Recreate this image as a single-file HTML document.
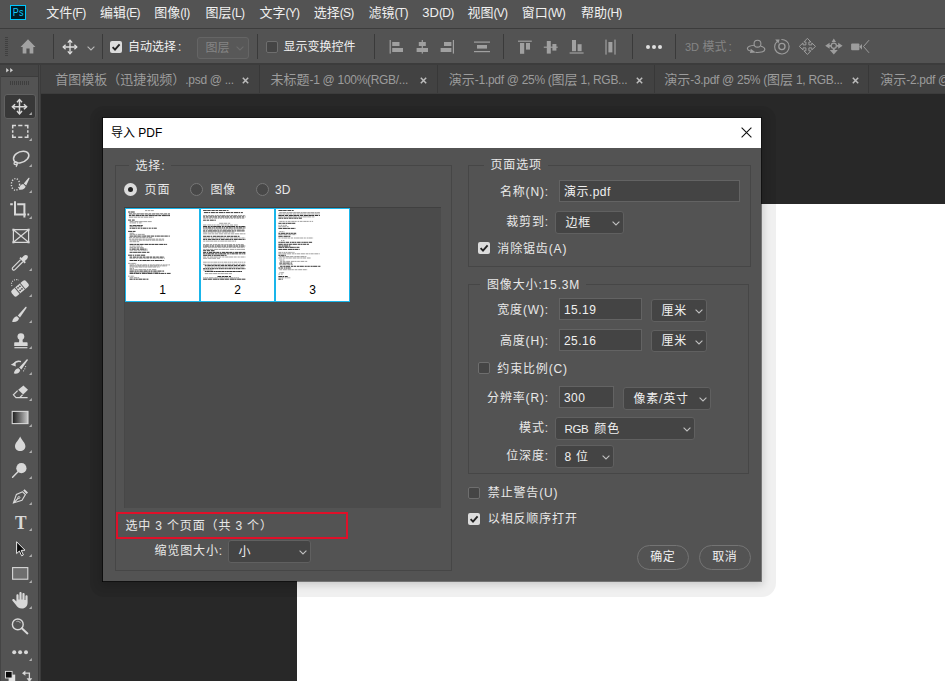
<!DOCTYPE html>
<html lang="zh-CN">
<head>
<meta charset="utf-8">
<title>导入 PDF</title>
<style>
*{box-sizing:border-box;margin:0;padding:0}
html,body{width:945px;height:681px;overflow:hidden;background:#282828}
body{position:relative;font-family:"Liberation Sans","Noto Sans CJK SC",sans-serif;font-size:12px;color:#e6e6e6}
.abs{position:absolute}
#menubar{left:0;top:0;width:945px;height:28px;background:#535353}
#menuline{left:0;top:28px;width:945px;height:1px;background:#3c3c3c}
#optbar{left:0;top:29px;width:945px;height:34px;background:#535353}
#optline{left:0;top:63px;width:945px;height:2px;background:#3c3c3c}
#toolbar{left:0;top:65px;width:41px;height:616px;background:#535353}
#toolline{display:none}
#tabbar{left:41px;top:65px;width:904px;height:29px;background:#424242;border-bottom:1px solid #3c3c3c}
#canvas{left:297px;top:204px;width:648px;height:477px;background:#fff}
.menu{position:absolute;top:0;height:27px;line-height:26px;font-size:13px;color:#f0f0f0;white-space:nowrap}
.tab{position:absolute;top:1px;height:28px;line-height:28px;font-size:13px;color:#9c9c9c;white-space:nowrap}
.tabsep{position:absolute;top:0;width:1px;height:28px;background:#383838}
.tabx{position:absolute;top:0;height:28px;line-height:27px;font-size:11px;color:#c8c8c8;font-weight:bold}
.vsep{position:absolute;top:5px;width:1px;height:25px;background:#3a3a3a}
#dlg{left:103px;top:117px;width:658px;height:464px;background:#535353;box-shadow:0 2px 8px 2px rgba(0,0,0,0.16)}
#dshadow{left:90px;top:106px;width:686px;height:491px;border-radius:14px;background:rgba(0,0,0,0.06)}
#dlgtitle{left:0;top:1px;width:658px;height:30px;background:#fff;color:#000;font-size:12px;line-height:31px;padding-left:8px}
.lbl{position:absolute;white-space:nowrap;font-size:12px;color:#e8e8e8;line-height:16px;letter-spacing:0.85px}
.grp{position:absolute;border:1px solid #464646}
.inp{position:absolute;background:#444;border:1px solid #636363;color:#f0f0f0;font-size:12px;line-height:18px;padding-left:4px;white-space:nowrap;letter-spacing:0.45px}
.sel{position:absolute;background:#444;border:1px solid #606060;border-radius:3px;color:#f0f0f0;font-size:12px;line-height:18px;padding-left:9.5px;white-space:nowrap;letter-spacing:0.8px}
.cb{position:absolute;width:12px;height:12px;border-radius:2px}
.cb.on{background:#dcdcdc}
.cb.off{background:#454545;border:1px solid #6e6e6e}
.btn{position:absolute;height:25px;border:1px solid #747474;border-radius:13px;color:#f0f0f0;font-size:12px;line-height:23px;text-align:center;letter-spacing:0.6px}

.chev{position:absolute;right:3.5px;top:8.5px}
.rd{position:absolute;width:13px;height:13px;border-radius:50%}
.rd.on{background:#dcdcdc}
.rd.on::after{content:"";position:absolute;left:4px;top:4px;width:5px;height:5px;border-radius:50%;background:#222}
.rd.off{background:#484848;border:1px solid #777}
#tlist{background:#4b4b4b;border-top:1px solid #404040;border-left:1px solid #474747}
.thumb{position:absolute;width:75px;height:94px;background:#fff;border:1px solid #19b5ea}
.tnum{position:absolute;left:0;width:73px;top:73px;text-align:center;color:#000;font-size:12px;line-height:16px}

.olbl{position:absolute;white-space:nowrap;font-size:12px;line-height:16px;color:#f0f0f0}

.ml{font-size:12px;letter-spacing:-0.7px}
.la{font-size:12px;letter-spacing:-0.3px}
</style>
</head>
<body>
<div id="menubar" class="abs">
<div class="abs" style="left:10px;top:5px;width:16px;height:15px;background:#001c26;border:1px solid #00c8ff;color:#14c6fa;font-size:10.5px;line-height:13px;text-align:center"><span style="display:inline-block;transform:scaleX(0.86)">Ps</span></div>
<div class="menu" style="left:46.3px">文件<span class="ml">(F)</span></div>
<div class="menu" style="left:100px">编辑<span class="ml">(E)</span></div>
<div class="menu" style="left:154.3px">图像<span class="ml">(I)</span></div>
<div class="menu" style="left:205.6px">图层<span class="ml">(L)</span></div>
<div class="menu" style="left:259.4px">文字<span class="ml">(Y)</span></div>
<div class="menu" style="left:313.7px">选择<span class="ml">(S)</span></div>
<div class="menu" style="left:368.5px">滤镜<span class="ml">(T)</span></div>
<div class="menu" style="left:422.3px">3D<span class="ml">(D)</span></div>
<div class="menu" style="left:467.5px">视图<span class="ml">(V)</span></div>
<div class="menu" style="left:521.8px">窗口<span class="ml">(W)</span></div>
<div class="menu" style="left:581.1px">帮助<span class="ml">(H)</span></div>
</div>
<div id="menuline" class="abs"></div>
<div id="optbar" class="abs">
<div class="abs" style="left:5px;top:8px;width:3px;height:19px;background:repeating-linear-gradient(to bottom,#404040 0,#404040 1px,transparent 1px,transparent 2px)"></div>
<svg class="abs" style="left:20px;top:10.4px" width="16" height="15" viewBox="0 0 18 15" preserveAspectRatio="none"><path d="M9 0.3 L0.6 8 L3 8 L3 14.5 L7.2 14.5 L7.2 9.5 L10.8 9.5 L10.8 14.5 L15 14.5 L15 8 L17.4 8 Z" fill="#a2a2a2"/></svg>
<div class="vsep" style="left:53px"></div>
<svg class="abs" style="left:61.5px;top:9.5px" width="16" height="16" viewBox="0 0 16 16"><g fill="none" stroke="#dedede" stroke-width="1.3"><path d="M8 1.5 V14.5 M1.5 8 H14.5"/><path d="M5.8 3.6 L8 1.2 L10.2 3.6 M5.8 12.4 L8 14.8 L10.2 12.4 M3.6 5.8 L1.2 8 L3.6 10.2 M12.4 5.8 L14.8 8 L12.4 10.2"/></g></svg>
<svg class="abs" style="left:86.5px;top:16.5px" width="8" height="5" viewBox="0 0 8 5"><path d="M0.6 0.6 L4 4 L7.4 0.6" fill="none" stroke="#b8b8b8" stroke-width="1.1"/></svg>
<div class="vsep" style="left:102px"></div>
<div class="cb on" style="left:110px;top:12px"><svg width="12" height="12" viewBox="0 0 12 12"><path d="M2.6 6.2 L5 8.6 L9.6 3.4" fill="none" stroke="#222" stroke-width="1.9"/></svg></div>
<div class="olbl" style="left:128px;top:10px">自动选择<span style="margin-left:2px">:</span></div>
<div class="abs" style="left:196.5px;top:7.5px;width:52px;height:22px;border:1px solid #656565;border-radius:3px;background:#585858;color:#858585;font-size:12px;line-height:20px;padding-left:8px">图层<svg class="abs" style="right:4px;top:8px" width="8" height="5" viewBox="0 0 8 5"><path d="M0.6 0.6 L4 4 L7.4 0.6" fill="none" stroke="#6c6c6c" stroke-width="1.1"/></svg></div>
<div class="vsep" style="left:257px"></div>
<div class="cb off" style="left:265.7px;top:12px"></div>
<div class="olbl" style="left:283.6px;top:10px">显示变换控件</div>
<div class="vsep" style="left:374px"></div>
<div class="vsep" style="left:503px"></div>
<div class="vsep" style="left:632px"></div>
<div class="abs" style="left:646px;top:15.5px;width:4px;height:4px;border-radius:50%;background:#e0e0e0;box-shadow:6px 0 0 #e0e0e0,12px 0 0 #e0e0e0"></div>
<div class="vsep" style="left:675px"></div>
<div class="olbl" style="left:685px;top:10px;color:#858585"><span style="font-size:11px">3D</span> 模式<span style="margin-left:2px">:</span></div>
<svg class="abs" style="left:380px;top:0" width="500" height="34" viewBox="380 29 500 34">
<g fill="#a0a0a0" stroke="none">
<rect x="389.6" y="40" width="1.2" height="13.6"/><rect x="392.2" y="42" width="7.3" height="4"/><rect x="392.2" y="48" width="10.8" height="4"/>
<rect x="421.7" y="40" width="1.2" height="13.6"/><rect x="418.8" y="42" width="7" height="4"/><rect x="416.6" y="48" width="11.4" height="4"/>
<rect x="452.8" y="40" width="1.2" height="13.6"/><rect x="444" y="42" width="7.4" height="4"/><rect x="440.6" y="48" width="10.8" height="4"/>
<rect x="474" y="41.5" width="16" height="1.2"/><rect x="474" y="51" width="16" height="1.2"/><rect x="477" y="45" width="10" height="3.6"/>
<rect x="518" y="40.6" width="13.8" height="1.2"/><rect x="520" y="43" width="4.2" height="10.8"/><rect x="526" y="43" width="4" height="6.6"/>
<rect x="543.8" y="46.6" width="13.9" height="1.2"/><rect x="546.8" y="41" width="4" height="12.6"/><rect x="552.4" y="44" width="4" height="6.6"/>
<rect x="569.6" y="52.4" width="14" height="1.2"/><rect x="572" y="40" width="4" height="11.2"/><rect x="577.6" y="44.2" width="4" height="7"/>
<rect x="605.4" y="39.6" width="1.2" height="15"/><rect x="614.4" y="39.6" width="1.2" height="15"/><rect x="608.4" y="42" width="4" height="10.4"/>
</g>
<g fill="none" stroke="#9c9c9c" stroke-width="1.1">
<circle cx="757.5" cy="43.7" r="3.4"/>
<path d="M754.2 45.2 C750.6 45.4 747.2 46.8 747.4 48.8 C747.5 49.8 748.6 50.6 750.4 51 M755.6 52.4 C759.4 52.7 764.6 52 764.8 49.6 C764.9 47.9 763 46.7 760.9 46.2"/>
<circle cx="781.9" cy="46.5" r="3.1" stroke-width="1.3"/>
<path d="M777 41.6 C774 44.2 773.8 49.2 776.8 52 C779.8 54.8 784.6 54.6 787.3 51.6 C790 48.6 789.6 43.8 786.6 41.2 C785 39.9 783.2 39.4 781.4 39.5"/>
<path d="M807.4 38.3 L810.9 42.0 H808.9 V44.9 H811.8 V42.9 L815.5 46.4 L811.8 49.9 V47.9 H808.9 V50.8 H810.9 L807.4 54.5 L803.9 50.8 H805.9 V47.9 H803.0 V49.9 L799.3 46.4 L803.0 42.9 V44.9 H805.9 V42.0 H803.9 Z" stroke-width="1"/>
<circle cx="833.8" cy="45.8" r="2.6" stroke-width="1.2"/>
<path d="M869 40.2 L863.5 46.5 L869 52.8" stroke-width="1"/>
</g>
<g fill="#9c9c9c">
<path d="M750.7 48.7 L755.8 52.4 L750 53 Z"/>
<path d="M775.2 39.6 L779.6 39.6 L778.4 43.6 Z"/>
<path d="M833.8 38.6 L836 42 H831.6 Z M825.2 45.8 L829.6 42.8 V44.9 H831 V46.7 H829.6 V48.8 Z M842.6 45.8 L838.2 42.8 V44.9 H836.8 V46.7 H838.2 V48.8 Z M833.8 54.4 L829.8 50 H832.8 V48.6 H834.8 V50 H837.8 Z"/>
<rect x="851.1" y="43.5" width="8.3" height="6.7" rx="1"/><path d="M859.2 46.8 L862 43.9 V49.8 Z"/>
</g>
</svg>
</div>
<div id="optline" class="abs"></div>
<div id="toolbar" class="abs">
<div class="abs" style="left:0;top:0;width:40px;height:11px;background:#454545"></div>
<div class="abs" style="left:0;top:11px;width:40px;height:1px;background:#3c3c3c"></div>
<div class="abs" style="left:10px;top:15.5px;width:19px;height:4px;background:repeating-linear-gradient(to right,#3e3e3e 0,#3e3e3e 1px,transparent 1px,transparent 2px)"></div>
<svg class="abs" style="left:5.5px;top:3.4px" width="8" height="5" viewBox="0 0 8 5"><path d="M0.2 0 L3 2.3 L0.2 4.6 Z M4.2 0 L7 2.3 L4.2 4.6 Z" fill="#d0d0d0"/></svg>
<div class="abs" style="left:4px;top:28.5px;width:31.5px;height:25px;background:#383838;border:1px solid #616161;border-radius:3px"></div>
<svg class="abs" style="left:0;top:0" width="40" height="616" viewBox="0 65 40 616">
<g fill="none" stroke="#d8d8d8" stroke-width="1.4" stroke-linejoin="miter">
<!-- move -->
<path d="M19.5 99.8 V113.6 M12.6 106.7 H26.4" stroke-width="1.5"/>
<path d="M17 102.3 L19.5 99.6 L22 102.3 M17 111.1 L19.5 113.8 L22 111.1 M15.1 104.2 L12.4 106.7 L15.1 109.2 M23.9 104.2 L26.6 106.7 L23.9 109.2" stroke-width="1.5"/>
<!-- marquee -->
<path d="M12.7 128.5 V125.6 H16 M18.2 125.6 H22.4 M24.6 125.6 H27.8 V128.5 M27.8 130.3 V132.7 M27.8 134.5 V137.2 H24.6 M22.4 137.2 H18.2 M16 137.2 H12.7 V134.5 M12.7 132.7 V130.3" stroke-width="1.5"/>
<!-- lasso -->
<path d="M16.6 162.6 C12.6 161.2 12.4 156.6 16.4 153.6 C20.4 150.6 26.6 150.4 28.4 153.6 C30.2 157 26.4 161.6 20.6 162.8 C18.6 163.2 17.4 162.9 16.6 162.6 Z" stroke-width="1.5"/>
<path d="M17.6 163.4 C17.4 161.6 14.2 161.4 14 163.2 C13.9 164.8 17 165 17.3 163.4 C17.4 164.6 16.8 166 16 166.8" stroke-width="1.3"/>
<!-- quick select dotted circle -->
<ellipse cx="15.5" cy="184.4" rx="4.1" ry="5.8" stroke-width="1.4" stroke-dasharray="1.2 1.5"/>
<!-- crop -->
<path d="M10.2 204.3 H12.8 M15 201.2 V214.6 H25.8 M27.4 214.6 H29.2" stroke-width="2"/>
<path d="M17.2 204.3 H24.4 V217.6" stroke-width="2"/>
<!-- frame -->
<path d="M13.4 229.7 H28.6 V242.3 H13.4 Z M13.4 229.7 L28.6 242.3 M28.6 229.7 L13.4 242.3" stroke-width="1.2"/>
<!-- eyedropper tube -->
<path d="M20.6 259.6 L12.9 267.3 C12 268.2 12.2 269.3 12.8 269.7 C13.4 270.2 14.4 270.2 15.2 269.4 L22.9 261.8" stroke-width="1.2"/>
<!-- healing dotted -->
<path d="M12 286 C10.4 283 12.6 279.6 16.4 279.6 C17.4 279.6 18.2 279.8 18.8 280.2" stroke-width="1.1" stroke-dasharray="1 1.3"/>
<!-- eraser outline -->
<path d="M17.6 390.6 L13.4 394.8 L16 397.6 H19.6 L22.6 394.8 M16 397.6 H27.6" stroke-width="1.2"/>
<!-- history brush arrow -->
<path d="M13.6 364.4 C15.4 361.6 18.4 360.8 21 361.6" stroke-width="1.3"/>
<!-- pen -->
<path d="M22.6 491.8 L16.4 494.4 L13.4 503 L22 500.4 L25.4 494.6 Z M13.6 502.8 L18.4 498" stroke-width="1.1"/>
<circle cx="18.9" cy="497.5" r="1" stroke-width="0.9"/>
<!-- zoom -->
<circle cx="17.8" cy="624.4" r="5.4" stroke-width="1.4"/>
<path d="M21.8 628.3 L27.4 633.4" stroke-width="2" stroke-linecap="round"/>
<path d="M16.4 621.6 C18 620.8 20 621.6 20.6 623.2" stroke-width="0.9" stroke="#bdbdbd"/>
<!-- dodge handle -->
<path d="M18 471.8 L12.6 477.2" stroke-width="1.5" stroke-linecap="round"/>
<!-- stamp base line -->
<path d="M14.4 347.7 H27.4" stroke-width="1.2"/>
<!-- swap arrows -->
<path d="M24.6 673.2 H29.4 V679" stroke-width="1.3"/>
</g>
<g fill="#d8d8d8" stroke="none">
<!-- frame corner dots -->
<rect x="12.4" y="228.7" width="2" height="2"/><rect x="27.6" y="228.7" width="2" height="2"/><rect x="12.4" y="241.3" width="2" height="2"/><rect x="27.6" y="241.3" width="2" height="2"/>
<!-- quick select brush -->
<path d="M18.8 189.4 C19 186.6 21 184.4 23.2 184 L25.6 186.4 C25 188.8 22.6 190.2 18.8 189.4 Z"/>
<path d="M23.8 183.4 L28.6 177.8 C29.2 177.4 29.8 178 29.4 178.7 L26.2 185.6 Z"/>
<!-- eyedropper head -->
<path d="M19.4 258.2 L20.6 257 L21.7 258 L23.6 256 C24.8 254.6 26.6 254.6 27.4 255.6 C28.2 256.6 28 258 26.8 259.2 L24.8 261.1 L25.8 262.2 L24.6 263.4 Z"/>
<!-- healing band-aid -->
<g transform="rotate(-40 20 288.4)">
<rect x="10.6" y="284.6" width="18.8" height="7.8" rx="2.2"/>
</g>
<!-- brush -->
<path d="M12.2 322 C12.6 318.6 14.6 316.4 17 316.2 L19 318.2 C18.6 320.8 16.2 322.6 12.2 322 Z"/>
<path d="M17.8 315.4 L25.4 307 C26 306.4 26.9 307.1 26.5 307.9 L20 317.6 Z"/>
<!-- stamp -->
<circle cx="20.9" cy="336.6" r="3.4"/>
<path d="M19.4 338.6 H22.4 L22.8 342.2 H26.6 C27.2 342.2 27.6 342.6 27.6 343.2 V345.9 H14.2 V343.2 C14.2 342.6 14.6 342.2 15.2 342.2 H19 Z"/>
<!-- history brush -->
<path d="M13.8 373.6 C14.2 370.4 16.2 368.4 18.4 368.2 L20.2 370 C19.8 372.6 17.6 374.2 13.8 373.6 Z"/>
<path d="M19.2 367.4 L26.6 359.4 C27.2 358.8 28.1 359.5 27.7 360.3 L21.4 369.6 Z"/>
<path d="M10.8 364.8 L15.4 362 L15.8 366.4 Z"/>
<circle cx="25.6" cy="366.6" r="0.6"/><circle cx="24.8" cy="368.8" r="0.6"/><circle cx="23.6" cy="370.8" r="0.6"/>
<!-- eraser top -->
<path d="M18.2 389.8 L23.4 385.4 L28 389.8 L23.2 394.4 Z"/>
<!-- drop -->
<path d="M20.2 436.6 C21.6 440 25.4 443 25.4 446.2 C25.4 449 23.2 451 20.2 451 C17.2 451 15 449 15 446.2 C15 443 18.8 440 20.2 436.6 Z"/>
<!-- dodge -->
<circle cx="21.4" cy="468.2" r="5.1"/>
<!-- pen cap -->
<path d="M23.2 490.6 L24.6 489.2 L28 492.6 L26.6 494 Z"/>
<!-- hand -->
<path d="M12.3 600.4 C12 599.2 13.2 598.4 14.2 599.2 L16.4 601.6 V595.4 C16.4 594 18.6 594 18.6 595.4 V599.6 H19.4 V593 C19.4 591.6 21.6 591.6 21.6 593 V599.6 H22.4 V594 C22.4 592.6 24.6 592.6 24.6 594 V600 H25.4 V596.4 C25.4 595 27.6 595 27.6 596.4 V602.4 C27.6 606 25.4 608.4 22 608.4 C18.6 608.4 17.4 607 15.6 604.4 Z"/>
<!-- dots -->
<circle cx="14.2" cy="652.2" r="2"/><circle cx="20.1" cy="652.2" r="2"/><circle cx="26" cy="652.2" r="2"/>
<!-- swap arrow heads -->
<path d="M22 673.2 L25.4 670.6 V675.8 Z"/><path d="M29.4 682.2 L26.6 678.2 H32.2 Z"/>
</g>
<!-- heal squares -->
<g fill="#535353" transform="rotate(-40 20 288.4)">
<rect x="16.2" y="284.6" width="0.9" height="7.8"/><rect x="22.9" y="284.6" width="0.9" height="7.8"/>
<rect x="18" y="286" width="1.6" height="1.6"/><rect x="20.4" y="286" width="1.6" height="1.6"/><rect x="18" y="289.2" width="1.6" height="1.6"/><rect x="20.4" y="289.2" width="1.6" height="1.6"/>
</g>
<!-- gradient -->
<defs><linearGradient id="gr" x1="0" x2="1" y1="0" y2="0"><stop offset="0" stop-color="#1a1a1a"/><stop offset="1" stop-color="#c8c8c8"/></linearGradient></defs>
<rect x="12.2" y="411.4" width="15.8" height="12.2" fill="url(#gr)" stroke="#d8d8d8" stroke-width="1.1"/>
<!-- rectangle tool -->
<rect x="12.6" y="567.6" width="15.2" height="11.6" fill="#6e6e6e" stroke="#d8d8d8" stroke-width="1.1"/>
<!-- arrow -->
<path d="M16.6 541.8 V553.6 L19.4 551 L21.6 555.8 L23.4 555 L21.2 550.4 L25 550.2 Z" fill="#0a0a0a" stroke="#e8e8e8" stroke-width="1"/>
<!-- fg/bg -->
<rect x="8.6" y="674.6" width="6.6" height="7" fill="#e0e0e0"/>
<rect x="5.5" y="671.4" width="6.6" height="6.6" fill="#0a0a0a" stroke="#e0e0e0" stroke-width="0.9"/>
<!-- flyout triangles -->
<g fill="#b4b4b4">
<path d="M31.8 112.1 V114.9 H29 Z"/>
<path d="M31.8 138.1 V140.9 H29 Z"/>
<path d="M31.8 164.1 V166.9 H29 Z"/>
<path d="M31.8 190.1 V192.9 H29 Z"/>
<path d="M31.8 216.1 V218.9 H29 Z"/>
<path d="M31.8 268.1 V270.9 H29 Z"/>
<path d="M31.8 294.1 V296.9 H29 Z"/>
<path d="M31.8 320.1 V322.9 H29 Z"/>
<path d="M31.8 346.1 V348.9 H29 Z"/>
<path d="M31.8 372.1 V374.9 H29 Z"/>
<path d="M31.8 398.1 V400.9 H29 Z"/>
<path d="M31.8 424.1 V426.9 H29 Z"/>
<path d="M31.8 450.1 V452.9 H29 Z"/>
<path d="M31.8 476.1 V478.9 H29 Z"/>
<path d="M31.8 502.1 V504.9 H29 Z"/>
<path d="M31.8 528.1 V530.9 H29 Z"/>
<path d="M31.8 554.1 V556.9 H29 Z"/>
<path d="M31.8 580.1 V582.9 H29 Z"/>
<path d="M31.8 606.1 V608.9 H29 Z"/>
<path d="M31.8 658.1 V660.9 H29 Z"/>
</g>
<text x="0" y="529" text-anchor="middle" transform="translate(20.8 0) scale(0.89 1)" font-family="Liberation Serif, serif" font-weight="bold" font-size="19.5" fill="#d8d8d8">T</text>
</svg>
</div>
<div class="abs" style="left:0;top:65px;width:1px;height:616px;background:#444"></div>
<div class="abs" style="left:38px;top:65px;width:3px;height:616px;background:#3b3b3b"></div><div class="abs" style="left:39px;top:65px;width:1px;height:616px;background:#474747"></div>
<div id="tabbar" class="abs">
<div class="tab" style="left:14.3px">首图模板（迅捷视频）<span class="la">.psd @ ...</span></div>
<svg class="abs" style="left:200.8px;top:11.5px" width="7" height="7" viewBox="0 0 7 7"><path d="M0.8 0.8 L6.2 6.2 M6.2 0.8 L0.8 6.2" stroke="#bdbdbd" stroke-width="1.5" fill="none"/></svg>
<div class="tabsep" style="left:218px"></div>
<div class="tab" style="left:229.5px">未标题<span class="la">-1 @ 100%(RGB/...</span></div>
<svg class="abs" style="left:378.8px;top:11.5px" width="7" height="7" viewBox="0 0 7 7"><path d="M0.8 0.8 L6.2 6.2 M6.2 0.8 L0.8 6.2" stroke="#bdbdbd" stroke-width="1.5" fill="none"/></svg>
<div class="tabsep" style="left:396px"></div>
<div class="tab" style="left:407.8px">演示<span class="la">-1.pdf @ 25% (</span>图层<span class="la"> 1, RGB...</span></div>
<svg class="abs" style="left:594.7px;top:11.5px" width="7" height="7" viewBox="0 0 7 7"><path d="M0.8 0.8 L6.2 6.2 M6.2 0.8 L0.8 6.2" stroke="#bdbdbd" stroke-width="1.5" fill="none"/></svg>
<div class="tabsep" style="left:613px"></div>
<div class="tab" style="left:623.2px">演示<span class="la">-3.pdf @ 25% (</span>图层<span class="la"> 1, RGB...</span></div>
<svg class="abs" style="left:810.7px;top:11.5px" width="7" height="7" viewBox="0 0 7 7"><path d="M0.8 0.8 L6.2 6.2 M6.2 0.8 L0.8 6.2" stroke="#bdbdbd" stroke-width="1.5" fill="none"/></svg>
<div class="tabsep" style="left:827px"></div>
<div class="tab" style="left:839.2px">演示<span class="la">-2.pdf @ 25% (</span>图层<span class="la"> 1, RGB...</span></div>
</div>
<div id="canvas" class="abs"></div>
<div id="dshadow" class="abs"></div>
<div id="dlg" class="abs">
<div class="abs" style="left:-1px;top:0;width:660px;height:1px;background:#171717"></div>
<div class="abs" style="left:-1px;top:0;width:1px;height:465px;background:rgba(0,0,0,0.55)"></div>
<div class="abs" style="left:658px;top:0;width:1px;height:465px;background:rgba(0,0,0,0.45)"></div>
<div class="abs" style="left:-1px;top:464px;width:659px;height:1px;background:rgba(0,0,0,0.45)"></div>
<div id="dlgtitle" class="abs">导入 PDF</div>
<svg class="abs" style="left:637.5px;top:9.8px" width="11" height="11" viewBox="0 0 11 11"><path d="M0.6 0.6 L10.4 10.4 M10.4 0.6 L0.6 10.4" stroke="#111" stroke-width="1.1" fill="none"/></svg>
<div class="grp" style="left:12px;top:48px;width:337px;height:406px"></div>
<div class="lbl glbl" style="left:25.5px;top:40.5px;padding:0 6px 0 7px;background:#535353">选择:</div>
<div class="rd on" style="left:21.0px;top:65.5px"></div>
<div class="lbl" style="left:41.6px;top:65px;">页面</div>
<div class="rd off" style="left:86.9px;top:65.5px"></div>
<div class="lbl" style="left:107.5px;top:65px;">图像</div>
<div class="rd off" style="left:153.2px;top:65.5px"></div>
<div class="lbl" style="left:172px;top:65px;letter-spacing:0">3D</div>
<div class="abs" id="tlist" style="left:21px;top:90px;width:317px;height:301px"></div>
<div class="thumb" style="left:22px;top:91px"><svg class="abs" style="left:1px;top:1px" width="73" height="72" viewBox="0 0 73 72" ><g stroke="#000" fill="none"><path d="M18.0 0.6H26.8" stroke-width="0.8" stroke-opacity="0.48" stroke-dasharray="2.0 0.6 2.4 0.6 3.3 0.3 1.2 0.7"/><path d="M1.1 2.0H7.7" stroke-width="1.0" stroke-opacity="0.78" stroke-dasharray="2.1 0.4 4.5 0.5 4.0 0.5 3.3 0.4"/><path d="M1.9 3.5H43.0" stroke-width="0.8" stroke-opacity="0.48" stroke-dasharray="3.3 0.7 2.9 0.7 3.4 0.3 3.7 0.6"/><path d="M1.9 4.7H43.0" stroke-width="0.8" stroke-opacity="0.48" stroke-dasharray="2.2 0.3 4.1 0.5 3.6 0.7 3.6 0.8"/><path d="M1.9 5.6H43.0" stroke-width="1.0" stroke-opacity="0.78" stroke-dasharray="2.5 0.7 2.7 0.8 4.1 0.3 1.6 0.4"/><path d="M1.9 7.2H26.8" stroke-width="0.8" stroke-opacity="0.48" stroke-dasharray="4.4 0.5 3.3 0.5 2.9 0.5 2.4 0.6"/><path d="M1.1 10.1H7.7" stroke-width="1.0" stroke-opacity="0.78" stroke-dasharray="3.1 0.8 3.5 0.8 4.0 0.8 3.4 0.4"/><path d="M2.6 11.6H25.4" stroke-width="0.8" stroke-opacity="0.48" stroke-dasharray="4.0 0.8 4.2 0.6 3.6 0.4 3.9 0.6"/><path d="M2.6 12.9H15.1" stroke-width="0.8" stroke-opacity="0.48" stroke-dasharray="2.1 0.3 4.0 0.8 1.5 0.7 2.6 0.4"/><path d="M2.6 15.6H15.8" stroke-width="1.0" stroke-opacity="0.78" stroke-dasharray="2.2 0.7 4.1 0.3 3.2 0.3 3.6 0.5"/><path d="M2.6 16.7H15.1" stroke-width="0.8" stroke-opacity="0.48" stroke-dasharray="4.1 0.8 2.9 0.8 2.2 0.3 3.2 0.3"/><path d="M2.6 18.2H29.8" stroke-width="1.0" stroke-opacity="0.78" stroke-dasharray="1.9 0.5 3.2 0.4 1.3 0.7 2.2 0.8"/><path d="M1.1 21.4H8.5" stroke-width="1.0" stroke-opacity="0.78" stroke-dasharray="4.2 0.5 2.7 0.6 3.3 0.6 3.0 0.6"/><path d="M2.6 23.2H7.7" stroke-width="0.8" stroke-opacity="0.48" stroke-dasharray="4.3 0.6 2.6 0.7 2.0 0.5 4.4 0.6"/><path d="M2.6 24.4H18.0" stroke-width="0.8" stroke-opacity="0.48" stroke-dasharray="3.0 0.3 2.6 0.6 1.3 0.6 3.3 0.3"/><path d="M2.6 26.1H43.0" stroke-width="1.0" stroke-opacity="0.78" stroke-dasharray="3.3 0.5 3.4 0.5 3.5 0.7 1.3 0.3"/><path d="M1.9 27.6H25.4" stroke-width="0.8" stroke-opacity="0.48" stroke-dasharray="3.4 0.8 2.0 0.5 3.2 0.5 2.4 0.5"/><path d="M1.9 29.1H37.1" stroke-width="0.8" stroke-opacity="0.48" stroke-dasharray="2.4 0.6 2.2 0.5 3.7 0.3 3.1 0.7"/><path d="M2.6 30.2H37.1" stroke-width="0.8" stroke-opacity="0.48" stroke-dasharray="2.2 0.4 3.9 0.4 1.8 0.5 3.5 0.4"/><path d="M2.6 31.7H12.2" stroke-width="0.8" stroke-opacity="0.48" stroke-dasharray="2.3 0.5 4.0 0.5 4.0 0.4 2.3 0.6"/><path d="M2.6 34.4H40.1" stroke-width="1.0" stroke-opacity="0.78" stroke-dasharray="4.1 0.5 1.9 0.4 2.9 0.4 3.9 0.7"/><path d="M2.6 36.1H15.8" stroke-width="0.8" stroke-opacity="0.48" stroke-dasharray="1.8 0.4 3.9 0.6 3.9 0.5 1.6 0.4"/><path d="M2.6 37.6H16.6" stroke-width="0.8" stroke-opacity="0.48" stroke-dasharray="3.8 0.4 2.3 0.5 2.6 0.5 4.2 0.4"/><path d="M2.6 39.1H20.2" stroke-width="1.0" stroke-opacity="0.78" stroke-dasharray="1.2 0.8 4.1 0.8 2.6 0.8 4.3 0.4"/><path d="M2.6 40.2H21.0" stroke-width="0.8" stroke-opacity="0.48" stroke-dasharray="3.7 0.7 3.4 0.6 2.2 0.5 2.0 0.3"/><path d="M2.6 42.3H22.4" stroke-width="1.0" stroke-opacity="0.78" stroke-dasharray="3.1 0.4 3.9 0.3 4.2 0.6 4.2 0.7"/><path d="M1.1 45.2H18.8" stroke-width="1.0" stroke-opacity="0.78" stroke-dasharray="4.2 0.6 1.2 0.7 1.8 0.4 3.4 0.6"/><path d="M2.6 47.1H37.1" stroke-width="1.0" stroke-opacity="0.78" stroke-dasharray="2.6 0.8 3.2 0.5 2.0 0.7 2.8 0.7"/><path d="M2.6 48.2H37.9" stroke-width="0.8" stroke-opacity="0.48" stroke-dasharray="2.4 0.4 3.0 0.7 1.8 0.7 4.2 0.7"/><path d="M2.6 50.5H37.1" stroke-width="1.0" stroke-opacity="0.78" stroke-dasharray="3.9 0.3 3.3 0.7 1.4 0.4 2.1 0.6"/><path d="M1.1 53.4H9.2" stroke-width="0.8" stroke-opacity="0.48" stroke-dasharray="2.6 0.5 3.8 0.3 1.4 0.4 1.6 0.3"/><path d="M2.6 54.9H43.0" stroke-width="0.8" stroke-opacity="0.48" stroke-dasharray="4.4 0.7 1.5 0.6 2.2 0.5 2.4 0.6"/><path d="M2.6 55.9H40.1" stroke-width="0.8" stroke-opacity="0.48" stroke-dasharray="3.1 0.5 1.8 0.5 1.6 0.6 3.6 0.5"/><path d="M2.6 57.0H32.7" stroke-width="0.8" stroke-opacity="0.48" stroke-dasharray="1.5 0.4 2.4 0.6 3.8 0.5 3.8 0.6"/><path d="M2.6 58.4H7.0" stroke-width="0.8" stroke-opacity="0.48" stroke-dasharray="2.6 0.5 2.8 0.7 2.6 0.6 2.7 0.4"/><path d="M2.6 59.6H29.8" stroke-width="0.8" stroke-opacity="0.48" stroke-dasharray="3.0 0.6 1.4 0.5 2.6 0.7 4.3 0.5"/><path d="M2.6 61.1H37.1" stroke-width="1.0" stroke-opacity="0.78" stroke-dasharray="4.2 0.7 2.1 0.5 1.6 0.7 3.4 0.7"/><path d="M2.6 62.3H32.7" stroke-width="0.8" stroke-opacity="0.48" stroke-dasharray="3.8 0.6 3.6 0.6 1.5 0.6 1.2 0.4"/><path d="M2.6 63.4H43.7" stroke-width="1.0" stroke-opacity="0.78" stroke-dasharray="3.8 0.3 1.5 0.3 4.1 0.4 1.3 0.7"/><path d="M1.1 66.2H7.7" stroke-width="0.8" stroke-opacity="0.48" stroke-dasharray="1.6 0.7 3.4 0.7 4.3 0.6 3.8 0.3"/><path d="M2.6 67.7H12.2" stroke-width="0.8" stroke-opacity="0.48" stroke-dasharray="3.7 0.6 3.6 0.4 3.7 0.8 1.4 0.5"/><path d="M2.6 69.2H21.7" stroke-width="1.0" stroke-opacity="0.78" stroke-dasharray="3.1 0.7 2.0 0.4 2.0 0.6 3.7 0.5"/><path d="M22.0 72.4H22.9" stroke-width="0.8" stroke-opacity="0.48" stroke-dasharray="2.4 0.5 2.4 0.5 1.5 0.6 4.4 0.5"/></g></svg><div class="tnum">1</div></div>
<div class="thumb" style="left:97px;top:91px"><svg class="abs" style="left:1px;top:1px" width="73" height="72" viewBox="0 0 73 72" ><g stroke="#000" fill="none"><path d="M1.1 0.4H26.5" stroke-width="1.0" stroke-opacity="0.78" stroke-dasharray="3.7 0.4 3.5 0.7 3.4 0.6 2.8 0.6"/><path d="M1.9 2.6H40.9" stroke-width="1.0" stroke-opacity="0.78" stroke-dasharray="4.2 0.4 1.5 0.7 4.2 0.6 2.7 0.7"/><path d="M1.1 5.5H43.4" stroke-width="0.8" stroke-opacity="0.48" stroke-dasharray="1.8 0.4 1.9 0.6 2.2 0.4 3.5 0.8"/><path d="M1.1 6.9H43.4" stroke-width="1.0" stroke-opacity="0.78" stroke-dasharray="2.2 0.7 2.6 0.7 3.1 0.4 1.9 0.3"/><path d="M1.1 8.2H42.6" stroke-width="0.8" stroke-opacity="0.48" stroke-dasharray="2.8 0.5 1.8 0.5 2.3 0.7 1.7 0.8"/><path d="M1.1 10.2H13.8" stroke-width="1.0" stroke-opacity="0.78" stroke-dasharray="2.8 0.6 2.7 0.7 3.9 0.6 2.8 0.7"/><path d="M17.2 13.3H28.2" stroke-width="0.8" stroke-opacity="0.48" stroke-dasharray="4.0 0.5 3.6 0.8 2.7 0.4 2.0 0.7"/><path d="M1.1 15.0H35.8" stroke-width="0.8" stroke-opacity="0.48" stroke-dasharray="3.4 0.8 4.0 0.4 1.8 0.4 1.8 0.7"/><path d="M1.1 16.5H43.4" stroke-width="1.0" stroke-opacity="0.78" stroke-dasharray="4.0 0.7 2.0 0.7 2.2 0.5 3.6 0.3"/><path d="M1.1 17.9H43.4" stroke-width="1.0" stroke-opacity="0.78" stroke-dasharray="1.5 0.7 2.2 0.5 3.1 0.6 1.2 0.5"/><path d="M1.1 19.2H42.6" stroke-width="0.8" stroke-opacity="0.48" stroke-dasharray="2.6 0.5 1.9 0.6 4.4 0.5 3.0 0.4"/><path d="M1.1 20.9H42.6" stroke-width="1.0" stroke-opacity="0.78" stroke-dasharray="2.1 0.6 1.6 0.7 4.2 0.3 4.3 0.5"/><path d="M1.1 22.1H32.4" stroke-width="0.8" stroke-opacity="0.48" stroke-dasharray="3.7 0.7 2.2 0.6 3.4 0.7 2.1 0.7"/><path d="M1.1 23.8H43.4" stroke-width="0.8" stroke-opacity="0.48" stroke-dasharray="4.4 0.6 3.0 0.4 2.8 0.5 3.6 0.6"/><path d="M1.1 26.3H37.5" stroke-width="1.0" stroke-opacity="0.78" stroke-dasharray="3.1 0.4 3.3 0.6 1.8 0.7 3.4 0.4"/><path d="M1.1 28.0H43.4" stroke-width="0.8" stroke-opacity="0.48" stroke-dasharray="4.3 0.4 2.3 0.7 3.2 0.6 3.3 0.5"/><path d="M1.1 29.4H43.4" stroke-width="1.0" stroke-opacity="0.78" stroke-dasharray="2.2 0.4 1.4 0.7 3.7 0.6 3.6 0.5"/><path d="M1.1 31.1H34.1" stroke-width="0.8" stroke-opacity="0.48" stroke-dasharray="2.1 0.5 4.1 0.3 2.9 0.4 3.7 0.5"/><path d="M1.1 34.5H41.7" stroke-width="0.8" stroke-opacity="0.48" stroke-dasharray="2.3 0.5 3.0 0.7 2.4 0.7 1.6 0.4"/><path d="M1.1 36.0H43.4" stroke-width="1.0" stroke-opacity="0.78" stroke-dasharray="1.5 0.4 3.8 0.7 1.8 0.4 2.6 0.7"/><path d="M1.1 37.3H42.6" stroke-width="0.8" stroke-opacity="0.48" stroke-dasharray="3.9 0.7 3.2 0.4 2.5 0.4 2.9 0.6"/><path d="M1.1 39.4H43.4" stroke-width="0.8" stroke-opacity="0.48" stroke-dasharray="1.9 0.4 3.8 0.3 3.9 0.7 4.3 0.5"/><path d="M1.1 40.7H12.9" stroke-width="1.0" stroke-opacity="0.78" stroke-dasharray="3.0 0.6 3.3 0.8 3.5 0.4 4.0 0.5"/><path d="M1.1 42.4H43.4" stroke-width="1.0" stroke-opacity="0.78" stroke-dasharray="3.2 0.7 1.2 0.7 3.4 0.5 2.9 0.5"/><path d="M1.1 43.8H43.4" stroke-width="1.0" stroke-opacity="0.78" stroke-dasharray="1.8 0.6 1.3 0.6 3.3 0.5 3.1 0.8"/><path d="M1.1 45.3H24.8" stroke-width="1.0" stroke-opacity="0.78" stroke-dasharray="4.1 0.4 3.8 0.6 1.4 0.5 2.0 0.3"/><path d="M1.1 47.0H43.4" stroke-width="0.8" stroke-opacity="0.48" stroke-dasharray="3.0 0.8 2.3 0.7 3.5 0.4 4.0 0.6"/><path d="M1.1 48.3H18.0" stroke-width="0.8" stroke-opacity="0.48" stroke-dasharray="4.3 0.7 3.6 0.5 3.9 0.8 4.0 0.5"/><path d="M1.1 52.2H43.4" stroke-width="0.8" stroke-opacity="0.48" stroke-dasharray="3.7 0.5 1.6 0.3 1.5 0.4 1.7 0.5"/><path d="M1.1 54.3H43.4" stroke-width="0.8" stroke-opacity="0.48" stroke-dasharray="3.5 0.6 2.6 0.6 2.2 0.5 3.7 0.5"/><path d="M2.8 55.6H43.4" stroke-width="1.0" stroke-opacity="0.78" stroke-dasharray="1.8 0.7 3.6 0.5 2.4 0.6 3.2 0.4"/><path d="M2.8 57.1H42.6" stroke-width="0.8" stroke-opacity="0.48" stroke-dasharray="1.2 0.4 3.8 0.4 2.7 0.4 1.9 0.4"/><path d="M1.1 58.7H43.4" stroke-width="1.0" stroke-opacity="0.78" stroke-dasharray="2.5 0.4 1.3 0.4 1.8 0.5 1.4 0.3"/><path d="M1.1 60.0H11.2" stroke-width="0.8" stroke-opacity="0.48" stroke-dasharray="2.7 0.5 3.5 0.3 2.5 0.5 1.3 0.8"/><path d="M2.8 61.5H40.0" stroke-width="1.0" stroke-opacity="0.78" stroke-dasharray="1.9 0.3 2.8 0.4 3.3 0.5 1.6 0.3"/><path d="M2.8 63.6H29.9" stroke-width="0.8" stroke-opacity="0.48" stroke-dasharray="3.6 0.4 3.8 0.5 4.3 0.5 2.0 0.4"/><path d="M15.5 66.5H29.0" stroke-width="1.0" stroke-opacity="0.78" stroke-dasharray="3.9 0.6 2.3 0.3 3.5 0.8 3.2 0.3"/><path d="M1.1 67.8H37.5" stroke-width="0.8" stroke-opacity="0.48" stroke-dasharray="1.3 0.3 1.8 0.3 1.4 0.6 4.2 0.4"/><path d="M1.1 69.2H43.4" stroke-width="1.0" stroke-opacity="0.78" stroke-dasharray="4.4 0.5 3.9 0.8 4.3 0.3 2.2 0.6"/><path d="M22.1 72.4H22.9" stroke-width="0.8" stroke-opacity="0.48" stroke-dasharray="4.3 0.3 2.2 0.7 1.6 0.5 2.3 0.6"/></g></svg><div class="tnum">2</div></div>
<div class="thumb" style="left:172px;top:91px"><svg class="abs" style="left:1px;top:1px" width="73" height="72" viewBox="0 0 73 72" ><g stroke="#000" fill="none"><path d="M1.4 0.4H16.7" stroke-width="1.0" stroke-opacity="0.78" stroke-dasharray="4.3 0.4 3.6 0.7 4.0 0.6 4.2 0.5"/><path d="M2.3 2.6H42.9" stroke-width="0.8" stroke-opacity="0.48" stroke-dasharray="2.6 0.4 3.8 0.5 2.1 0.4 3.6 0.6"/><path d="M1.4 4.0H42.9" stroke-width="0.8" stroke-opacity="0.48" stroke-dasharray="3.5 0.5 2.8 0.4 3.5 0.3 2.7 0.7"/><path d="M1.4 5.5H42.9" stroke-width="1.0" stroke-opacity="0.78" stroke-dasharray="3.4 0.3 2.0 0.7 3.3 0.7 4.1 0.5"/><path d="M1.4 6.9H37.8" stroke-width="0.8" stroke-opacity="0.48" stroke-dasharray="4.2 0.7 2.3 0.5 1.4 0.5 4.4 0.4"/><path d="M1.4 8.2H25.1" stroke-width="1.0" stroke-opacity="0.78" stroke-dasharray="3.1 0.4 1.5 0.6 2.0 0.3 1.7 0.6"/><path d="M2.3 11.4H36.1" stroke-width="0.8" stroke-opacity="0.48" stroke-dasharray="3.1 0.3 2.0 0.8 1.9 0.6 2.6 0.7"/><path d="M1.4 13.3H18.4" stroke-width="1.0" stroke-opacity="0.78" stroke-dasharray="3.2 0.7 3.0 0.4 1.8 0.3 3.9 0.4"/><path d="M1.4 15.3H10.7" stroke-width="0.8" stroke-opacity="0.48" stroke-dasharray="1.3 0.8 1.9 0.7 1.5 0.5 1.9 0.7"/><path d="M1.4 16.7H11.6" stroke-width="0.8" stroke-opacity="0.48" stroke-dasharray="3.2 0.6 3.7 0.7 2.3 0.6 2.7 0.4"/><path d="M1.4 18.4H18.4" stroke-width="1.0" stroke-opacity="0.78" stroke-dasharray="4.0 0.6 3.9 0.4 3.0 0.5 3.6 0.3"/><path d="M2.3 21.6H7.4" stroke-width="0.8" stroke-opacity="0.48" stroke-dasharray="2.3 0.5 1.4 0.6 3.6 0.5 3.3 0.6"/><path d="M1.4 23.3H19.2" stroke-width="1.0" stroke-opacity="0.78" stroke-dasharray="1.9 0.5 4.5 0.5 2.6 0.3 1.9 0.4"/><path d="M1.4 24.6H19.2" stroke-width="0.8" stroke-opacity="0.48" stroke-dasharray="4.3 0.7 4.1 0.8 3.2 0.8 3.0 0.5"/><path d="M1.4 26.3H13.3" stroke-width="1.0" stroke-opacity="0.78" stroke-dasharray="4.3 0.8 4.3 0.5 3.8 0.5 4.5 0.8"/><path d="M1.4 28.0H36.1" stroke-width="0.8" stroke-opacity="0.48" stroke-dasharray="2.2 0.8 1.8 0.3 3.6 0.4 2.9 0.6"/><path d="M4.0 30.6H7.4" stroke-width="0.8" stroke-opacity="0.48" stroke-dasharray="1.3 0.7 2.1 0.5 2.3 0.7 3.7 0.4"/><path d="M1.4 32.3H35.3" stroke-width="1.0" stroke-opacity="0.78" stroke-dasharray="1.5 0.4 2.6 0.3 1.7 0.7 3.5 0.8"/><path d="M1.4 34.3H31.9" stroke-width="1.0" stroke-opacity="0.78" stroke-dasharray="4.4 0.7 2.4 0.4 2.2 0.5 2.9 0.6"/><path d="M1.4 36.0H13.3" stroke-width="1.0" stroke-opacity="0.78" stroke-dasharray="2.4 0.7 2.1 0.5 4.1 0.7 2.2 0.4"/><path d="M1.4 37.3H22.6" stroke-width="1.0" stroke-opacity="0.78" stroke-dasharray="3.9 0.3 1.6 0.6 3.0 0.4 1.4 0.4"/><path d="M1.4 39.4H22.6" stroke-width="1.0" stroke-opacity="0.78" stroke-dasharray="3.7 0.5 4.4 0.7 4.4 0.3 1.8 0.3"/><path d="M1.4 42.4H17.5" stroke-width="0.8" stroke-opacity="0.48" stroke-dasharray="2.6 0.5 1.4 0.6 1.5 0.5 2.0 0.7"/><path d="M1.4 43.8H42.9" stroke-width="0.8" stroke-opacity="0.48" stroke-dasharray="2.6 0.4 1.3 0.5 3.3 0.6 4.2 0.7"/><path d="M1.4 45.3H9.0" stroke-width="1.0" stroke-opacity="0.78" stroke-dasharray="2.0 0.4 3.7 0.7 2.9 0.7 3.0 0.4"/><path d="M2.3 46.6H29.4" stroke-width="0.8" stroke-opacity="0.48" stroke-dasharray="1.8 0.3 3.3 0.7 4.2 0.5 3.4 0.8"/><path d="M1.4 48.0H33.6" stroke-width="0.8" stroke-opacity="0.48" stroke-dasharray="3.9 0.6 2.6 0.6 1.8 0.4 3.5 0.8"/><path d="M2.3 50.0H7.4" stroke-width="0.8" stroke-opacity="0.48" stroke-dasharray="3.0 0.5 2.4 0.5 3.8 0.5 4.4 0.4"/><path d="M3.1 51.4H30.2" stroke-width="0.8" stroke-opacity="0.48" stroke-dasharray="2.2 0.6 2.6 0.7 3.9 0.8 3.2 0.3"/><path d="M2.3 53.1H15.8" stroke-width="1.0" stroke-opacity="0.78" stroke-dasharray="3.1 0.6 2.8 0.4 3.5 0.8 1.5 0.6"/><path d="M2.3 54.6H15.8" stroke-width="0.8" stroke-opacity="0.48" stroke-dasharray="2.4 0.6 4.2 0.8 3.3 0.4 4.2 0.4"/><path d="M3.1 56.3H43.8" stroke-width="1.0" stroke-opacity="0.78" stroke-dasharray="2.5 0.7 2.2 0.4 4.3 0.8 2.2 0.5"/><path d="M1.4 58.0H14.1" stroke-width="1.0" stroke-opacity="0.78" stroke-dasharray="2.1 0.4 2.0 0.8 1.5 0.4 1.9 0.3"/><path d="M2.3 59.7H30.2" stroke-width="0.8" stroke-opacity="0.48" stroke-dasharray="2.9 0.7 4.0 0.6 3.9 0.3 2.1 0.8"/><path d="M2.3 62.7H7.4" stroke-width="0.8" stroke-opacity="0.48" stroke-dasharray="1.4 0.4 2.8 0.4 3.0 0.3 2.0 0.8"/><path d="M1.4 64.1H5.7" stroke-width="0.8" stroke-opacity="0.48" stroke-dasharray="1.7 0.8 1.8 0.8 3.4 0.6 1.7 0.3"/><path d="M1.4 66.5H10.7" stroke-width="1.0" stroke-opacity="0.78" stroke-dasharray="3.7 0.4 1.8 0.7 4.1 0.3 4.4 0.6"/><path d="M1.4 67.8H13.3" stroke-width="0.8" stroke-opacity="0.48" stroke-dasharray="2.5 0.4 2.5 0.8 2.1 0.4 1.7 0.4"/><path d="M1.4 69.2H5.7" stroke-width="1.0" stroke-opacity="0.78" stroke-dasharray="2.4 0.8 1.5 0.4 4.3 0.8 4.4 0.4"/><path d="M22.1 72.4H22.9" stroke-width="0.8" stroke-opacity="0.48" stroke-dasharray="2.4 0.8 2.8 0.7 2.2 0.3 2.3 0.7"/></g></svg><div class="tnum">3</div></div>
<div class="abs" style="left:13px;top:395px;width:232px;height:27px;border:2px solid #df1029"></div>
<div class="lbl" style="left:22.4px;top:401px;">选中 3 个页面（共 3 个）</div>
<div class="lbl" style="right:538px;top:426px;">缩览图大小:</div>
<div class="sel" style="left:125px;top:423px;width:83px;height:23px;line-height:22px">小<svg class="chev" width="8" height="5" viewBox="0 0 8 5"><path d="M0.6 0.6 L4 4 L7.4 0.6" fill="none" stroke="#c0c0c0" stroke-width="1.1"/></svg></div>
<div class="grp" style="left:365px;top:48px;width:283px;height:102px"></div>
<div class="lbl glbl" style="left:380.5px;top:40px;padding:0 6px 0 7px;background:#535353">页面选项</div>
<div class="lbl" style="right:212px;top:67px;">名称(N):</div>
<div class="inp" style="left:456px;top:63px;width:181px;height:22px;line-height:22px">演示.pdf</div>
<div class="lbl" style="right:212px;top:96.5px;">裁剪到:</div>
<div class="sel" style="left:452px;top:94px;width:69px;height:23px;line-height:22px">边框<svg class="chev" width="8" height="5" viewBox="0 0 8 5"><path d="M0.6 0.6 L4 4 L7.4 0.6" fill="none" stroke="#c0c0c0" stroke-width="1.1"/></svg></div>
<div class="cb on" style="left:374.6px;top:125.4px"><svg width="12" height="12" viewBox="0 0 12 12"><path d="M2.6 6.2 L5 8.6 L9.6 3.4" fill="none" stroke="#222" stroke-width="1.9"/></svg></div>
<div class="lbl" style="left:394.3px;top:123.5px;">消除锯齿(A)</div>
<div class="grp" style="left:365px;top:167px;width:281px;height:190px"></div>
<div class="lbl glbl" style="left:377px;top:159.5px;padding:0 6px 0 7px;background:#535353">图像大小:15.3M</div>
<div class="lbl" style="right:212px;top:184.6px;">宽度(W):</div>
<div class="inp" style="left:456px;top:181px;width:83px;height:22px;line-height:22px">15.19</div>
<div class="sel" style="left:548px;top:182px;width:56px;height:23px;line-height:22px">厘米<svg class="chev" width="8" height="5" viewBox="0 0 8 5"><path d="M0.6 0.6 L4 4 L7.4 0.6" fill="none" stroke="#c0c0c0" stroke-width="1.1"/></svg></div>
<div class="lbl" style="right:212px;top:216px;">高度(H):</div>
<div class="inp" style="left:456px;top:212px;width:83px;height:22px;line-height:22px">25.16</div>
<div class="sel" style="left:548px;top:213px;width:56px;height:22px;line-height:21px">厘米<svg class="chev" width="8" height="5" viewBox="0 0 8 5"><path d="M0.6 0.6 L4 4 L7.4 0.6" fill="none" stroke="#c0c0c0" stroke-width="1.1"/></svg></div>
<div class="cb off" style="left:374.6px;top:245.4px"></div>
<div class="lbl" style="left:394.3px;top:243.5px;">约束比例(C)</div>
<div class="lbl" style="right:212px;top:272.7px;">分辨率(R):</div>
<div class="inp" style="left:456px;top:269px;width:55px;height:22px;line-height:22px">300</div>
<div class="sel" style="left:520px;top:270px;width:88px;height:23px;line-height:22px">像素/英寸<svg class="chev" width="8" height="5" viewBox="0 0 8 5"><path d="M0.6 0.6 L4 4 L7.4 0.6" fill="none" stroke="#c0c0c0" stroke-width="1.1"/></svg></div>
<div class="lbl" style="right:212px;top:302.8px;">模式:</div>
<div class="sel" style="left:452px;top:300px;width:140px;height:23px;line-height:22px;padding-left:8.5px"><span style="font-size:11.5px;letter-spacing:-0.4px;margin-right:2px">RGB</span> 颜色<svg class="chev" width="8" height="5" viewBox="0 0 8 5"><path d="M0.6 0.6 L4 4 L7.4 0.6" fill="none" stroke="#c0c0c0" stroke-width="1.1"/></svg></div>
<div class="lbl" style="right:212px;top:330.6px;">位深度:</div>
<div class="sel" style="left:452px;top:328px;width:59px;height:23px;line-height:22px;padding-left:8.5px">8 位<svg class="chev" width="8" height="5" viewBox="0 0 8 5"><path d="M0.6 0.6 L4 4 L7.4 0.6" fill="none" stroke="#c0c0c0" stroke-width="1.1"/></svg></div>
<div class="cb off" style="left:364.5px;top:370.3px"></div>
<div class="lbl" style="left:384.8px;top:368.4px;">禁止警告(U)</div>
<div class="cb on" style="left:364.5px;top:396.3px"><svg width="12" height="12" viewBox="0 0 12 12"><path d="M2.6 6.2 L5 8.6 L9.6 3.4" fill="none" stroke="#222" stroke-width="1.9"/></svg></div>
<div class="lbl" style="left:384.8px;top:394.4px;">以相反顺序打开</div>
<div class="btn" style="left:533.5px;top:427.5px;width:52.5px">确定</div>
<div class="btn" style="left:595.5px;top:427.5px;width:52.5px">取消</div>
</div>
</body>
</html>
